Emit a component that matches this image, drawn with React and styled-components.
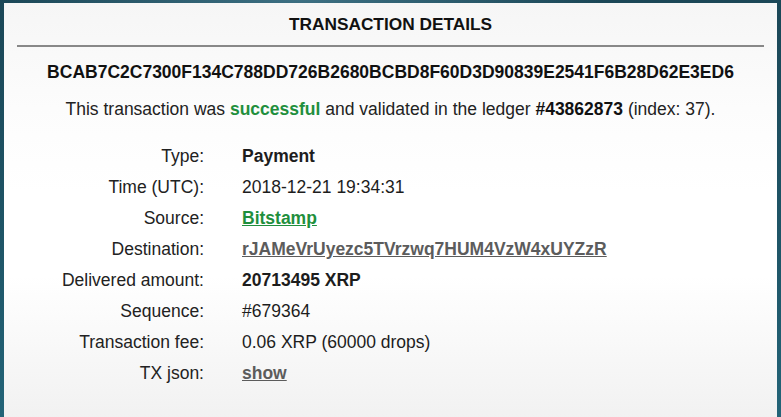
import React from 'react'
import styled, { createGlobalStyle } from 'styled-components'

const Global = createGlobalStyle`
  html, body {
    margin: 0;
    padding: 0;
    height: 100%;
    overflow: hidden;
  }
  body {
    background: radial-gradient(ellipse 300px 30px at 300px 0, #3d7083 0%, rgba(61,112,131,0) 100%),
      linear-gradient(#1b4757, #1f5668 60%, #236478);
    font-family: Arial, "Liberation Sans", sans-serif;
    color: #1d1d1d;
  }
`

const Card = styled.main`
  margin: 3px 4px 0 4px;
  padding: 0 13px;
  height: 420px;
  box-sizing: border-box;
  background: linear-gradient(#f6f6f6 0, #fcfcfc 25%, #ffffff 45%, #ffffff 65%, #f1f1f1 100%);
`

const Title = styled.h2`
  margin: 0;
  padding: 11px 0 11px;
  font-size: 17.3px;
  line-height: 20px;
  font-weight: bold;
  text-align: center;
  color: #111;
`

const Rule = styled.hr`
  margin: 0;
  border: 0;
  height: 2px;
  background: #888;
`

const Hash = styled.div`
  margin-top: 15px;
  font-size: 17.5px;
  line-height: 20px;
  font-weight: bold;
  text-align: center;
  color: #111;
`

const Summary = styled.p`
  margin: 17px 0 0;
  font-size: 17.5px;
  line-height: 20px;
  text-align: center;
  color: #222;
`

const Good = styled.span`
  font-weight: bold;
  color: #1f8f3d;
`

const Strong = styled.b`
  color: #111;
`

const Table = styled.dl`
  display: grid;
  grid-template-columns: 187px auto;
  column-gap: 38px;
  margin: 22px 0 0;
  font-size: 17.5px;
`

const Label = styled.dt`
  text-align: right;
  line-height: 31px;
  color: #222;
`

const Value = styled.dd`
  margin: 0;
  line-height: 31px;
  color: #1d1d1d;
  font-weight: ${p => (p.$bold ? 'bold' : 'normal')};
`

const Link = styled.a`
  font-weight: bold;
  color: ${p => (p.$green ? '#1f8f3d' : '#5c5c5c')};
  text-decoration: underline;
  cursor: pointer;
`

const rows = [
  ['Type:', <Value $bold>Payment</Value>],
  ['Time (UTC):', <Value>2018-12-21 19:34:31</Value>],
  ['Source:', <Value><Link $green>Bitstamp</Link></Value>],
  ['Destination:', <Value><Link>rJAMeVrUyezc5TVrzwq7HUM4VzW4xUYZzR</Link></Value>],
  ['Delivered amount:', <Value $bold>20713495 XRP</Value>],
  ['Sequence:', <Value>#679364</Value>],
  ['Transaction fee:', <Value>0.06 XRP (60000 drops)</Value>],
  ['TX json:', <Value><Link>show</Link></Value>],
]

export default function App() {
  return (
    <>
      <Global />
      <Card>
        <Title>TRANSACTION DETAILS</Title>
        <Rule />
        <Hash>BCAB7C2C7300F134C788DD726B2680BCBD8F60D3D90839E2541F6B28D62E3ED6</Hash>
        <Summary>
          This transaction was <Good>successful</Good> and validated in the ledger{' '}
          <Strong>#43862873</Strong> (index: 37).
        </Summary>
        <Table>
          {rows.map(([label, value]) => (
            <React.Fragment key={label}>
              <Label>{label}</Label>
              {value}
            </React.Fragment>
          ))}
        </Table>
      </Card>
    </>
  )
}
